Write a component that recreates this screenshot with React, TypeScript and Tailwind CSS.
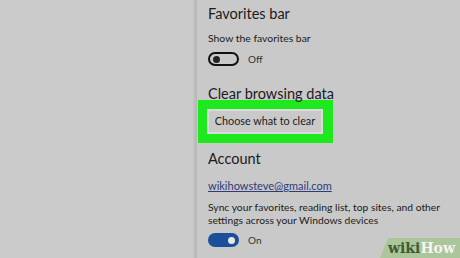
import React from "react";

const font = { fontFamily: 'Lato, "Noto Sans", sans-serif' };

function Toggle({ on }: { on: boolean }) {
  if (on) {
    return (
      <div className="w-[31px] h-[14px] rounded-full bg-[#1c4f9a] flex items-center justify-end pr-[4px]">
        <div className="w-[7px] h-[7px] rounded-full bg-[#e8e8e8]" />
      </div>
    );
  }
  return (
    <div className="w-[31px] h-[14px] rounded-full border-2 border-[#111] flex items-center pl-[3px]">
      <div className="w-[7px] h-[7px] rounded-full bg-[#222]" />
    </div>
  );
}

export default function App() {
  return (
    <div className="w-[460px] h-[258px] flex overflow-hidden bg-[#cbcbcb] relative" style={font}>
      <div className="w-[193px] shrink-0 bg-[#cbcbcb]" />
      <div className="w-[4px] shrink-0 bg-gradient-to-r from-[#c4c4c4] to-[#b5b5b5]" />
      <div className="flex-1 bg-[#c9c9c9] pl-[11px] text-[#1b1b1b] whitespace-nowrap">
        <div className="mt-[4px] text-[14.5px] leading-[20px]">Favorites bar</div>
        <div className="mt-[7px] text-[10.4px] leading-[14px]">Show the favorites bar</div>
        <div className="mt-[7px] flex items-center gap-[9px]">
          <Toggle on={false} />
          <span className="text-[10px] leading-[14px] text-[#333]">Off</span>
        </div>
        <div className="mt-[18px] text-[14.5px] leading-[20px]">Clear browsing data</div>
        <div className="-ml-[10px] -mt-[4px] w-[135px] h-[43px] bg-[#1ee81e] flex items-center pl-[9px]">
          <div className="w-[116px] h-[25px] border-2 border-[#dadada] bg-[#c9c9c9] flex items-center justify-center text-[10.8px]">
            Choose what to clear
          </div>
        </div>
        <div className="mt-[6px] text-[14.5px] leading-[20px]">Account</div>
        <div className="mt-[10px] text-[11px] leading-[14px] text-[#2c3a78] underline">wikihowsteve@gmail.com</div>
        <div className="mt-[8px] text-[10.3px] leading-[12.5px]">
          Sync your favorites, reading list, top sites, and other
          <br />
          settings across your Windows devices
        </div>
        <div className="mt-[7px] flex items-center gap-[9px]">
          <Toggle on={true} />
          <span className="text-[10px] leading-[14px] text-[#333]">On</span>
        </div>
      </div>
      <div className="absolute right-0 bottom-0 w-[80px] h-[20px] bg-[#a9c597]/90 [clip-path:polygon(8px_0,100%_0,100%_100%,0_100%)] flex items-center justify-end pr-[5px]">
        <span className="text-[14px] font-bold leading-[16px]" style={{ fontFamily: '"DejaVu Serif", serif' }}>
          <span className="text-[#3f5a30]">wiki</span>
          <span className="text-[#f4f4f0]">How</span>
        </span>
      </div>
    </div>
  );
}
